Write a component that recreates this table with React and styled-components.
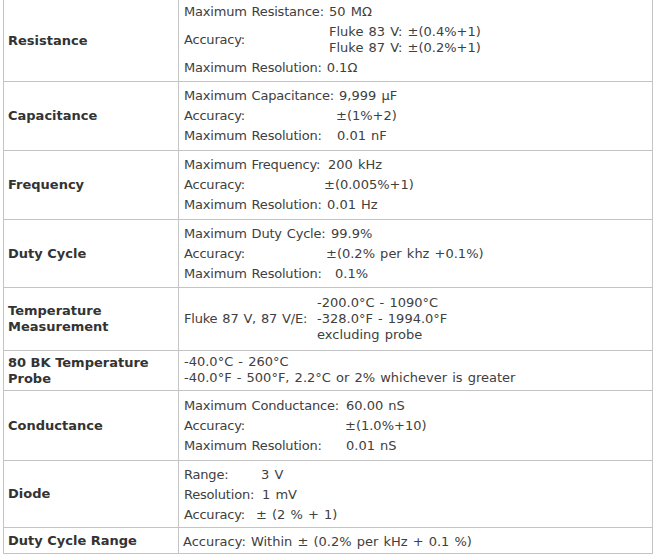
import React from 'react';
import styled, { createGlobalStyle } from 'styled-components';

const GlobalStyle = createGlobalStyle`
  html, body {
    margin: 0;
    padding: 0;
    background: #ffffff;
  }
  body {
    font-family: "DejaVu Sans", Verdana, sans-serif;
  }
`;

const Page = styled.div`
  padding: 0 3px;
`;

const SpecTable = styled.table`
  width: 650px;
  border-collapse: collapse;
  table-layout: fixed;
  font-size: 13px;
  line-height: 16px;
  color: #404040;
`;

const NameCol = styled.col`
  width: 175px;
`;

const Row = styled.tr`
  & > td {
    border: 1px solid #c4c4c4;
  }
  &:first-child > td {
    border-top: 0;
  }
`;

const NameCell = styled.td`
  padding: 0 4px;
  font-weight: bold;
  color: #333333;
  vertical-align: middle;
`;

const ValueCell = styled.td`
  padding: ${(p) => p.$pad};
  vertical-align: middle;
  word-spacing: 1px;
`;

const Line = styled.div`
  display: flex;
  align-items: center;
  padding: ${(p) => (p.$tight ? '0' : '2px 0')};
`;

// label column: at least $w wide, never touching its value
const Key = styled.span`
  flex: none;
  box-sizing: border-box;
  min-width: ${(p) => p.$w}px;
  padding-right: 5px;
  letter-spacing: -0.2px;
  white-space: pre;
`;

const Val = styled.div`
  white-space: pre;
`;

// [label, value(s), label width]
const specs = [
  {
    name: 'Resistance',
    pad: '2px 5px 3px',
    lines: [
      ['Maximum Resistance:', '50 MΩ', 145],
      ['Accuracy:', ['Fluke 83 V: ±(0.4%+1)', 'Fluke 87 V: ±(0.2%+1)'], 145],
      ['Maximum Resolution:', '0.1Ω', 142],
    ],
  },
  {
    name: 'Capacitance',
    pad: '4px 5px 4px',
    lines: [
      ['Maximum Capacitance:', '9,999 µF', 146],
      ['Accuracy:', '±(1%+2)', 152],
      ['Maximum Resolution:', '0.01 nF', 153],
    ],
  },
  {
    name: 'Frequency',
    pad: '4px 5px 4px',
    lines: [
      ['Maximum Frequency:', '200 kHz', 144],
      ['Accuracy:', '±(0.005%+1)', 140],
      ['Maximum Resolution:', '0.01 Hz', 143],
    ],
  },
  {
    name: 'Duty Cycle',
    pad: '4px 5px 3px',
    lines: [
      ['Maximum Duty Cycle:', '99.9%', 147],
      ['Accuracy:', '±(0.2% per khz +0.1%)', 142],
      ['Maximum Resolution:', '0.1%', 151],
    ],
  },
  {
    name: ['Temperature', 'Measurement'],
    pad: '5px 5px',
    lines: [
      [
        'Fluke 87 V, 87 V/E:',
        ['-200.0°C - 1090°C', '-328.0°F - 1994.0°F', 'excluding probe'],
        133,
      ],
    ],
  },
  {
    name: ['80 BK Temperature', 'Probe'],
    pad: '3px 5px 4px',
    plain: ['-40.0°C - 260°C', '-40.0°F - 500°F, 2.2°C or 2% whichever is greater'],
  },
  {
    name: 'Conductance',
    pad: '5px 5px 4px',
    lines: [
      ['Maximum Conductance:', '60.00 nS', 162],
      ['Accuracy:', '±(1.0%+10)', 161],
      ['Maximum Resolution:', '0.01 nS', 162],
    ],
  },
  {
    name: 'Diode',
    pad: '4px 5px 2px',
    lines: [
      ['Range:', '3 V', 77],
      ['Resolution:', '1 mV', 78],
      ['Accuracy:', '± (2 % + 1)', 72],
    ],
  },
  {
    name: 'Duty Cycle Range',
    pad: '6px 4px 3px',
    plain: ['Accuracy: Within ± (0.2% per kHz + 0.1 %)'],
  },
];

const SpecName = ({ name }) =>
  Array.isArray(name) ? name.map((n) => <div key={n}>{n}</div>) : name;

const SpecLine = ({ label, value, width }) => (
  <Line>
    <Key $w={width}>{label}</Key>
    <Val>
      {Array.isArray(value) ? value.map((v) => <div key={v}>{v}</div>) : value}
    </Val>
  </Line>
);

const App = () => (
  <Page>
    <GlobalStyle />
    <SpecTable>
      <colgroup>
        <NameCol />
        <col />
      </colgroup>
      <tbody>
        {specs.map((s) => (
          <Row key={String(s.name)}>
            <NameCell>
              <SpecName name={s.name} />
            </NameCell>
            <ValueCell $pad={s.pad}>
              {s.plain
                ? s.plain.map((t) => (
                    <Line key={t} $tight>
                      <Val>{t}</Val>
                    </Line>
                  ))
                : s.lines.map(([label, value, width]) => (
                    <SpecLine key={label} label={label} value={value} width={width} />
                  ))}
            </ValueCell>
          </Row>
        ))}
      </tbody>
    </SpecTable>
  </Page>
);

export default App;
